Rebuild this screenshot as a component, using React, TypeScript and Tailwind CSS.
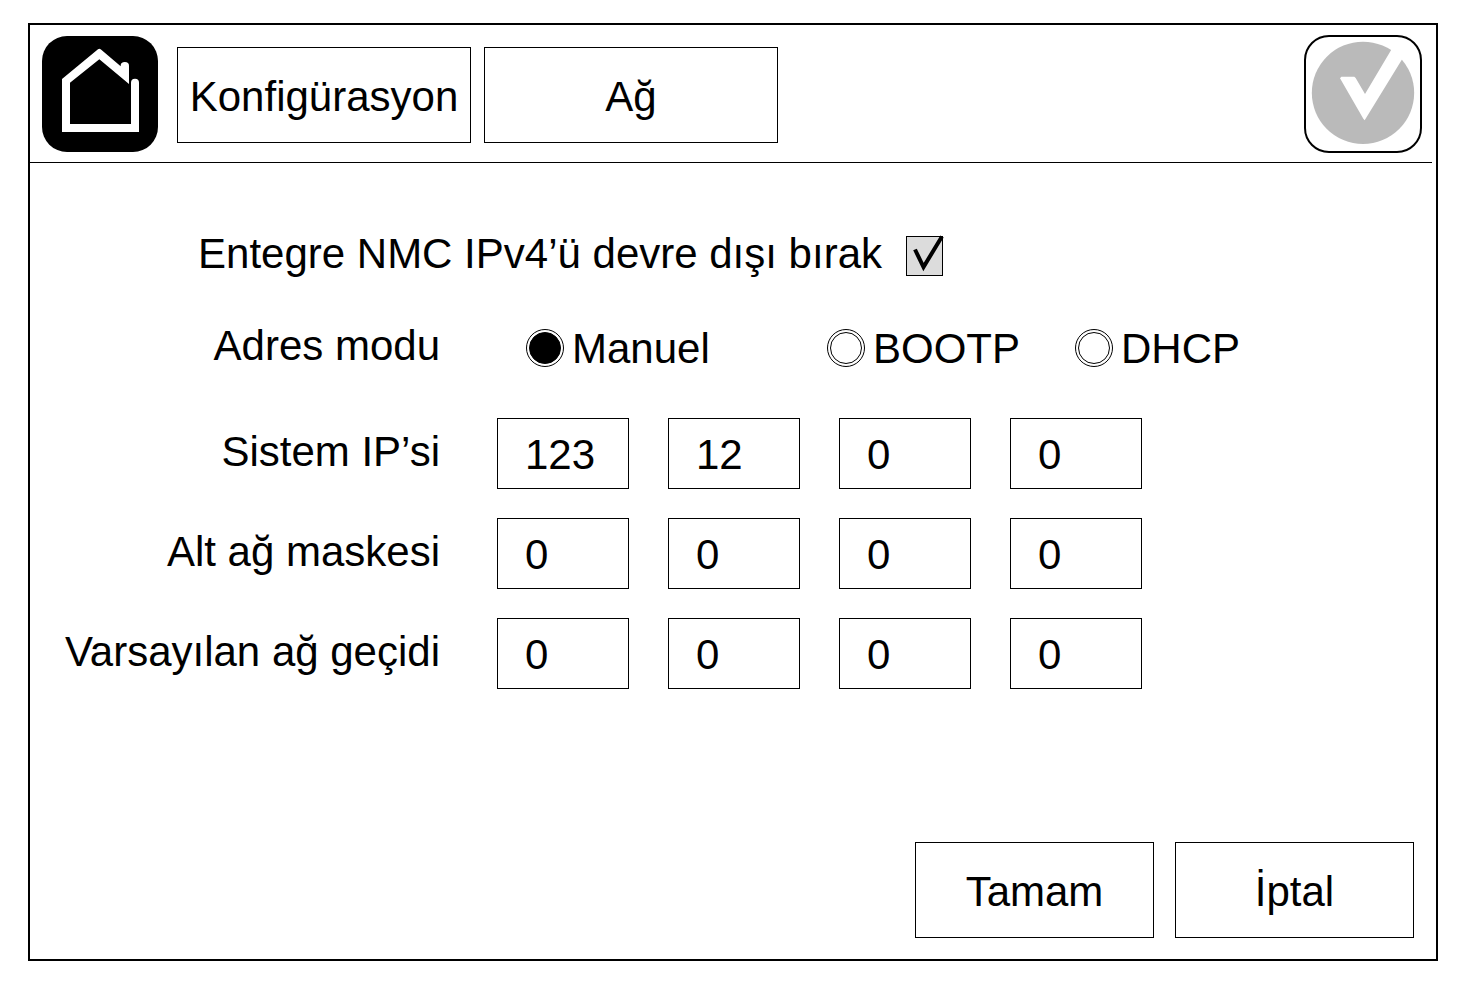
import { useState } from "react";

type Octets = [string, string, string, string];

const labelClass = "pb-1 text-right text-[42px] leading-[48px] whitespace-nowrap";
const buttonClass = "h-24 border border-black pt-1 text-[42px] leading-[48px]";

function HomeIcon() {
  return (
    <svg viewBox="0 0 348 348" className="size-full" aria-hidden="true">
      <path
        fill="#fff"
        d="M60 129 L168 40 Q172 36 176 40 L236 91 V89 A12.5 11 0 0 1 261 89 V144 L172 70 L84 140 V264 H267 V140 A12 12 0 0 1 291 140 V288 H60 Z"
      />
    </svg>
  );
}

function StatusIcon() {
  return (
    <svg viewBox="6 6 342 342" className="size-full" aria-hidden="true">
      <circle cx="177" cy="173.5" r="153.5" fill="#bababa" />
      <path
        fill="#fff"
        d="M112 125 H151 L155 129 L183 177 L261 46 L267 36 L303 60 L293 75 L182 256 L178 251 L108 130 Z"
      />
    </svg>
  );
}

function RadioOption({
  id,
  label,
  checked,
  onSelect,
}: {
  id: string;
  label: string;
  checked: boolean;
  onSelect: () => void;
}) {
  return (
    <div className="flex items-center gap-2">
      <input
        id={id}
        type="radio"
        name="mode"
        checked={checked}
        onChange={onSelect}
        className="flex size-[38px] shrink-0 appearance-none items-center justify-center rounded-full border border-black bg-white before:size-8 before:rounded-full before:border before:border-black before:content-[''] checked:before:bg-black"
      />
      <label htmlFor={id} className="pt-0.5 text-[42px] leading-[48px]">
        {label}
      </label>
    </div>
  );
}

function AddressRow({ id, label, initial }: { id: string; label: string; initial: Octets }) {
  const [values, setValues] = useState<string[]>(initial);
  return (
    <div className="flex items-center gap-[57px]">
      <label htmlFor={`${id}-0`} className={`w-[410px] shrink-0 ${labelClass}`}>
        {label}
      </label>
      <div className="flex gap-[39px]">
        {values.map((value, i) => (
          <input
            key={i}
            id={`${id}-${i}`}
            aria-label={i === 0 ? undefined : `${label} ${i + 1}`}
            type="text"
            inputMode="numeric"
            maxLength={3}
            value={value}
            onChange={(e) => setValues(values.map((v, j) => (j === i ? e.target.value : v)))}
            className="h-[71px] w-[132px] border border-black bg-white pt-0.5 pl-[27px] text-[42px] leading-[48px]"
          />
        ))}
      </div>
    </div>
  );
}

const modes = ["Manuel", "BOOTP", "DHCP"];

export default function App() {
  const [disabled, setDisabled] = useState(true);
  const [mode, setMode] = useState("Manuel");

  return (
    <div className="flex min-h-screen bg-white py-[23px] pr-[27px] pl-7 font-['Liberation_Sans',Arial,sans-serif] text-black">
      <div className="flex flex-1 flex-col border-2 border-black">
        <header className="mr-1 flex h-[138px] items-center border-b border-black pr-2.5 pl-3">
          <button type="button" aria-label="Ana sayfa" className="size-[116px] shrink-0 rounded-[25px] bg-black">
            <HomeIcon />
          </button>
          <nav className="ml-[19px] flex gap-[13px] pt-0.5">
            <button type="button" className={`w-[294px] ${buttonClass}`}>
              Konfigürasyon
            </button>
            <button type="button" className={`w-[294px] ${buttonClass}`}>
              Ağ
            </button>
          </nav>
          <button
            type="button"
            aria-label="Durum"
            className="ml-auto size-[118px] shrink-0 rounded-[25px] border-2 border-black bg-white"
          >
            <StatusIcon />
          </button>
        </header>

        <main className="flex flex-1 flex-col pt-[69px]">
          <div className="flex h-12 w-[913px] items-center justify-end gap-6">
            <label htmlFor="disable-ipv4" className={labelClass}>
              Entegre NMC IPv4’ü devre dışı bırak
            </label>
            <span className="relative flex">
              <input
                id="disable-ipv4"
                type="checkbox"
                checked={disabled}
                onChange={(e) => setDisabled(e.target.checked)}
                className="peer h-10 w-[37px] appearance-none border border-black bg-[#dcdcdc]"
              />
              <svg
                viewBox="0 0 37 40"
                className="pointer-events-none absolute inset-0 hidden size-full overflow-visible peer-checked:block"
                aria-hidden="true"
              >
                <path d="M9 13.5 L17.5 31 L36 0.5" fill="none" stroke="#000" strokeWidth="4" />
              </svg>
            </span>
          </div>

          <div className="mt-11 flex h-12 items-center gap-[86px]" role="radiogroup" aria-labelledby="mode-label">
            <span id="mode-label" className={`w-[410px] shrink-0 ${labelClass}`}>
              Adres modu
            </span>
            <div className="grid grid-cols-[301px_248px_auto]">
              {modes.map((m) => (
                <RadioOption key={m} id={`mode-${m}`} label={m} checked={mode === m} onSelect={() => setMode(m)} />
              ))}
            </div>
          </div>

          <div className="mt-[46px] flex flex-col gap-[29px]">
            <AddressRow id="ip" label="Sistem IP’si" initial={["123", "12", "0", "0"]} />
            <AddressRow id="mask" label="Alt ağ maskesi" initial={["0", "0", "0", "0"]} />
            <AddressRow id="gateway" label="Varsayılan ağ geçidi" initial={["0", "0", "0", "0"]} />
          </div>
        </main>

        <footer className="flex justify-end gap-[21px] pr-[22px] pb-[21px]">
          <button type="button" className={`w-[239px] ${buttonClass}`}>
            Tamam
          </button>
          <button type="button" className={`w-[239px] ${buttonClass}`}>
            İptal
          </button>
        </footer>
      </div>
    </div>
  );
}
